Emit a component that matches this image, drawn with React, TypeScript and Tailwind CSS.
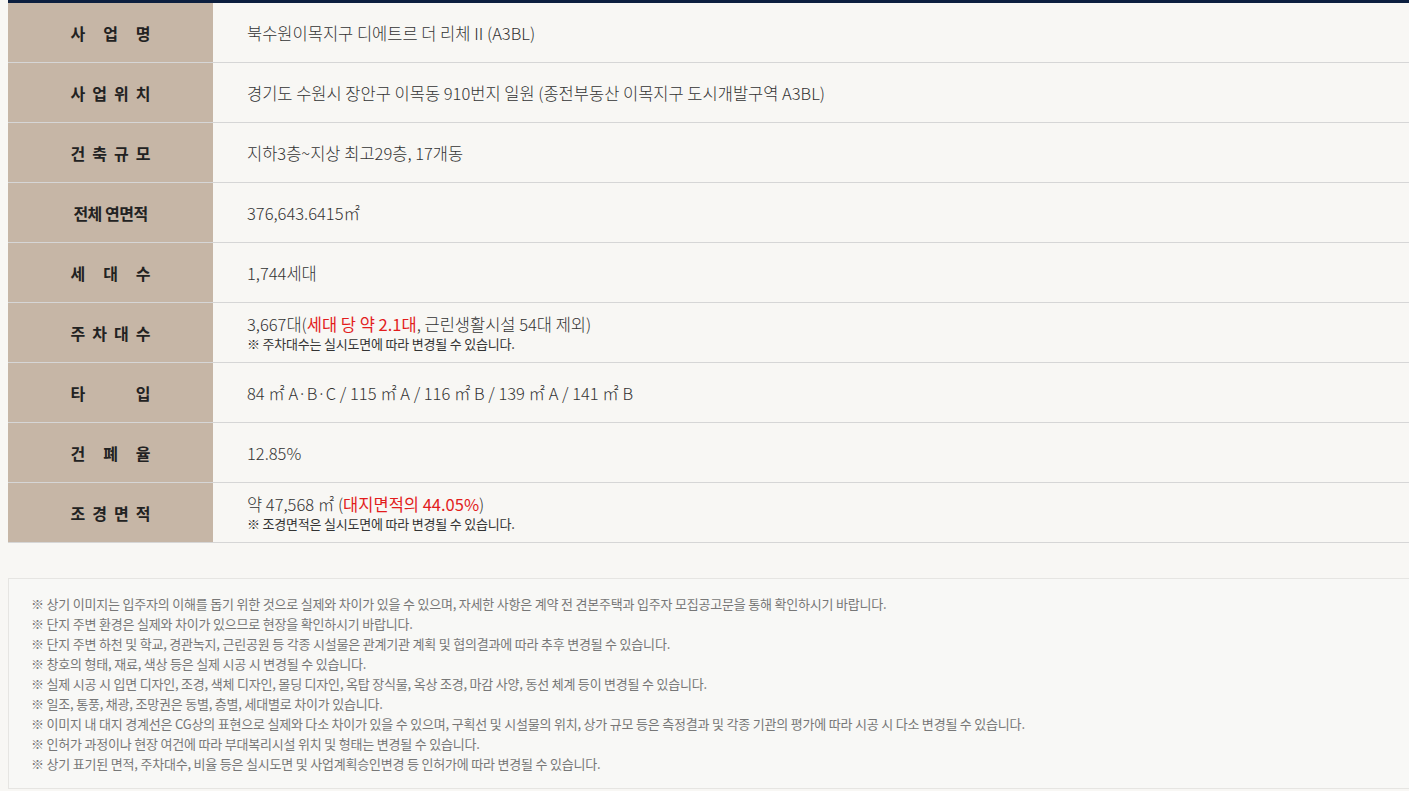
import React from 'react';

const font = { fontFamily: '"Noto Sans CJK KR", "Noto Sans", sans-serif' };

type Row = { label: string; value: React.ReactNode; note?: string };

const rows: Row[] = [
  { label: '사업명', value: '북수원이목지구 디에트르 더 리체Ⅱ(A3BL)' },
  { label: '사업위치', value: '경기도 수원시 장안구 이목동 910번지 일원 (종전부동산 이목지구 도시개발구역 A3BL)' },
  { label: '건축규모', value: '지하3층~지상 최고29층, 17개동' },
  { label: '전체연면적', value: '376,643.6415㎡' },
  { label: '세대수', value: '1,744세대' },
  {
    label: '주차대수',
    value: (
      <>
        3,667대(<span className="font-normal text-[#e21d1d]">세대 당 약 2.1대</span>, 근린생활시설 54대 제외)
      </>
    ),
    note: '※ 주차대수는 실시도면에 따라 변경될 수 있습니다.',
  },
  { label: '타입', value: '84 ㎡ A·B·C / 115 ㎡ A / 116 ㎡ B / 139 ㎡ A / 141 ㎡ B' },
  { label: '건폐율', value: '12.85%' },
  {
    label: '조경면적',
    value: (
      <>
        약 47,568 ㎡ (<span className="font-normal text-[#e21d1d]">대지면적의 44.05%</span>)
      </>
    ),
    note: '※ 조경면적은 실시도면에 따라 변경될 수 있습니다.',
  },
];

const notes = [
  '※ 상기 이미지는 입주자의 이해를 돕기 위한 것으로 실제와 차이가 있을 수 있으며, 자세한 사항은 계약 전 견본주택과 입주자 모집공고문을 통해 확인하시기 바랍니다.',
  '※ 단지 주변 환경은 실제와 차이가 있으므로 현장을 확인하시기 바랍니다.',
  '※ 단지 주변 하천 및 학교, 경관녹지, 근린공원 등 각종 시설물은 관계기관 계획 및 협의결과에 따라 추후 변경될 수 있습니다.',
  '※ 창호의 형태, 재료, 색상 등은 실제 시공 시 변경될 수 있습니다.',
  '※ 실제 시공 시 입면 디자인, 조경, 색체 디자인, 몰딩 디자인, 옥탑 장식물, 옥상 조경, 마감 사양, 동선 체계 등이 변경될 수 있습니다.',
  '※ 일조, 통풍, 채광, 조망권은 동별, 층별, 세대별로 차이가 있습니다.',
  '※ 이미지 내 대지 경계선은 CG상의 표현으로 실제와 다소 차이가 있을 수 있으며, 구획선 및 시설물의 위치, 상가 규모 등은 측정결과 및 각종 기관의 평가에 따라 시공 시 다소 변경될 수 있습니다.',
  '※ 인허가 과정이나 현장 여건에 따라 부대복리시설 위치 및 형태는 변경될 수 있습니다.',
  '※ 상기 표기된 면적, 주차대수, 비율 등은 실시도면 및 사업계획승인변경 등 인허가에 따라 변경될 수 있습니다.',
];

function Label({ text }: { text: string }) {
  if (text === '전체연면적') {
    return <span className="tracking-[-0.5px]">전체 연면적</span>;
  }
  return (
    <div className="flex w-[80px] justify-between">
      {text.split('').map((c, i) => (
        <span key={i}>{c}</span>
      ))}
    </div>
  );
}

export default function App() {
  return (
    <div className="min-h-screen bg-[#f8f7f4] pl-2 text-[#333]" style={font}>
      <div className="border-t-[3px] border-[#0c1f3f]">
        {rows.map((row, idx) => (
          <div key={idx} className="flex h-[60px] border-b border-[#d6d6d6]">
            <div className="flex w-[205px] shrink-0 items-center justify-center bg-[#c6b6a6] text-[16px] font-bold text-[#222]">
              <Label text={row.label} />
            </div>
            <div className="flex flex-col justify-center pl-[34px]">
              <p className="text-[16.5px] leading-[22px] font-light text-[#333]">{row.value}</p>
              {row.note && (
                <p className="text-[13px] leading-[18px] tracking-[-0.2px] text-[#333]">{row.note}</p>
              )}
            </div>
          </div>
        ))}
      </div>

      <div className="mt-[35px] border border-r-0 border-[#e6e5e2] bg-[#f8f8f6] px-[22px] pt-[15px] pb-[14px]">
        {notes.map((n, i) => (
          <p key={i} className="text-[13px] leading-[20px] tracking-[-0.2px] text-[#777]">
            {n}
          </p>
        ))}
      </div>
    </div>
  );
}
